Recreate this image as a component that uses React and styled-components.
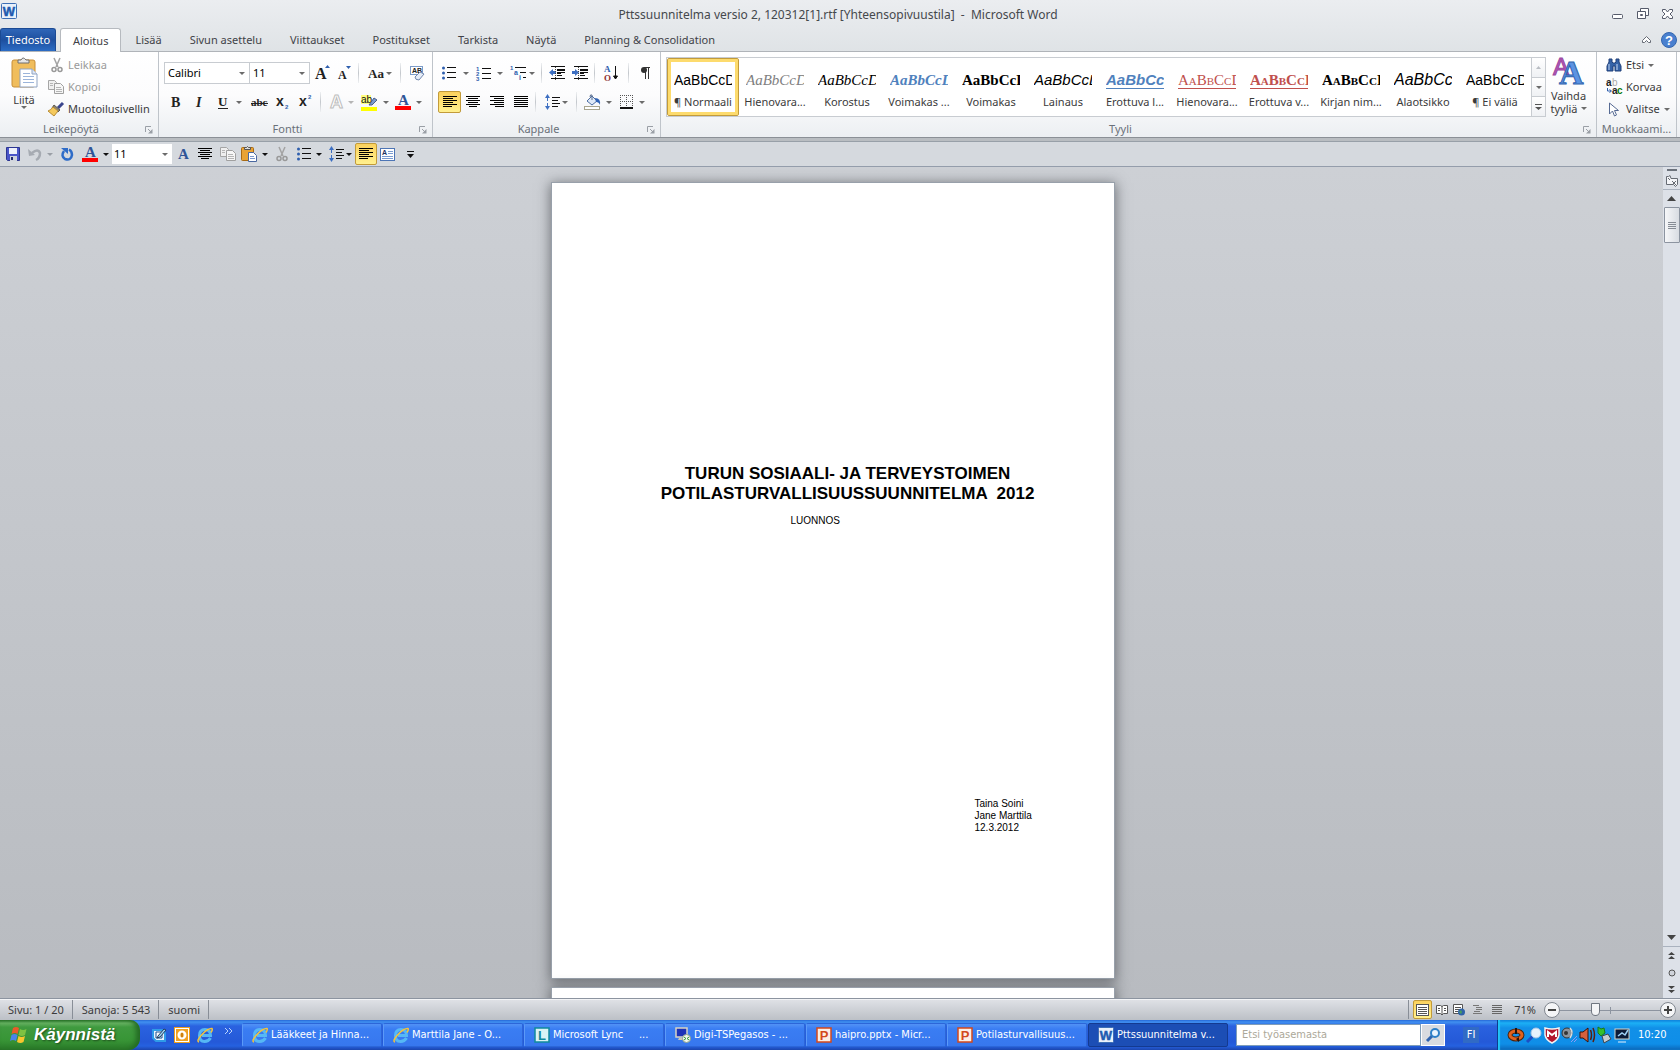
import { useState } from "react";
import styled, { createGlobalStyle, css } from "styled-components";

const GlobalStyle = createGlobalStyle`
  * {
    box-sizing: border-box;
  }

  body {
    margin: 0;
    font-family: "Noto Sans", "Open Sans", sans-serif;
    font-size: 11px;
    line-height: 14px;
    color: #3b3b3b;
  }

  button,
  input,
  select {
    font: inherit;
    color: inherit;
    margin: 0;
    padding: 0;
    border: 0;
    border-radius: 0;
    background: none;
  }

  svg {
    display: block;
    flex: none;
    overflow: visible;
  }
`;

const Screen = styled.div`
  display: flex;
  flex-direction: column;
  height: 100vh;
  overflow: hidden;
`;

/* ---------- title bar and tabs ---------- */

const Chrome = styled.header`
  background: linear-gradient(#ebedf0, #dfe3e6);
`;

const TitleBar = styled.div`
  display: grid;
  grid-template-columns: 120px 1fr 120px;
  align-items: center;
  height: 28px;
  padding: 0 5px 0 1px;
`;

const AppButton = styled.button`
  align-self: start;
  width: 16px;
  padding-top: 3px;
`;

const Title = styled.h1`
  margin: 0;
  padding-top: 2px;
  font-size: 12px;
  font-weight: 400;
  text-align: center;
  white-space: pre;
  color: #45484c;
`;

const WindowButtons = styled.div`
  display: flex;
  justify-content: flex-end;
  gap: 11px;
`;

const TabRow = styled.nav`
  display: flex;
  height: 24px;
  border-bottom: 1px solid #b0b4b9;
`;

const Tab = styled.button`
  height: 23px;
  padding: 0 14px;
  color: #3f4247;

  ${(p) =>
    p.$active &&
    css`
      height: 24px;
      padding: 0 12px;
      border: 1px solid #b6babf;
      border-bottom: 0;
      border-radius: 3px 3px 0 0;
      background: #fff;
    `}
`;

const FileTab = styled(Tab)`
  width: 56px;
  padding: 0;
  margin-right: 4px;
  border: 1px solid #1b4a94;
  border-bottom: 0;
  border-radius: 3px 3px 0 0;
  background: linear-gradient(#2f66b8, #1d4f9f 50%, #2b6cc4);
  color: #fff;
`;

const TabTools = styled.div`
  display: flex;
  align-items: center;
  gap: 10px;
  margin-left: auto;
  padding-right: 3px;
`;

/* ---------- ribbon ---------- */

const Ribbon = styled.div`
  display: flex;
  height: 86px;
  padding-right: 3px;
  border-bottom: 1px solid #8b9096;
  background: linear-gradient(#fff, #fcfcfd 50%, #eceff2);
`;

const Group = styled.section`
  display: flex;
  flex-direction: column;
  width: ${(p) => (p.$width ? `${p.$width}px` : "auto")};
  flex: ${(p) => (p.$width ? "none" : "1 1 0")};
  min-width: 0;
  border-right: 1px solid #bfc4ca;
`;

const GroupBody = styled.div`
  display: flex;
  flex: 1;
  min-height: 0;
  padding: 0 ${(p) => p.$pad || 0}px;
`;

const GroupFooter = styled.div`
  display: flex;
  align-items: center;
  height: 17px;
  color: #6a7079;
`;

const GroupName = styled.span`
  flex: 1;
  text-align: center;
  white-space: nowrap;
`;

const ToolRows = styled.div`
  display: flex;
  flex-direction: column;
  padding-top: 7px;
  gap: 1px;
`;

const ToolRow = styled.div`
  display: flex;
  align-items: center;
  height: 28px;
`;

const ToolButton = styled.button`
  display: flex;
  align-items: center;
  justify-content: center;
  gap: ${(p) => p.$gap || 0}px;
  flex: none;
  width: ${(p) => p.$width}px;
  height: 22px;

  ${(p) =>
    p.$active &&
    css`
      border: 1px solid #c29b3a;
      border-radius: 2px;
      background: linear-gradient(#fbd15d, #ffe57a 60%, #fff08f);
    `}
`;

const Divider = styled.i`
  flex: none;
  width: 1px;
  height: 20px;
  margin: 0 ${(p) => p.$space}px;
  background: linear-gradient(#eef0f2, #c3c7cc, #eef0f2);
`;

const Caret = styled.i`
  flex: none;
  width: 0;
  height: 0;
  border: 3px solid transparent;
  border-top-color: ${(p) => p.$color || "#6b6b6b"};
  border-bottom-width: 0;
`;

const ComboBox = styled.label`
  display: flex;
  align-items: center;
  flex: none;
  width: ${(p) => p.$width}px;
  height: ${(p) => p.$height}px;
  padding-right: 4px;
  border: ${(p) => (p.$plain ? "0" : "1px solid #c8ccd1")};
  background: #fff;
  color: #000;

  & + & {
    border-left: 0;
  }

  select {
    flex: 1;
    min-width: 0;
    padding-left: ${(p) => (p.$plain ? 2 : 3)}px;
    appearance: none;
    outline: 0;
  }
`;

const LargeButton = styled.button`
  display: flex;
  flex-direction: column;
  align-items: center;
  width: ${(p) => p.$width}px;
  padding-top: 5px;
  line-height: 13px;

  svg {
    margin-bottom: 4px;
  }
`;

const InlineLabel = styled.span`
  display: flex;
  align-items: center;
  gap: 3px;
`;

const SmallList = styled.div`
  display: flex;
  flex-direction: column;
  padding-top: 2px;
`;

const SmallButton = styled.button`
  display: flex;
  align-items: center;
  gap: 4px;
  height: 22px;
  color: ${(p) => (p.$muted ? "#9a9a9a" : "#3b3b3b")};
  white-space: nowrap;
`;

const Gallery = styled.div`
  display: flex;
  flex: 1;
  min-width: 0;
  height: 60px;
  margin-top: 5px;
  border: 1px solid #c8ccd1;
  background: #fff;
`;

const GalleryItems = styled.div`
  display: flex;
  flex: 1;
  min-width: 0;
  overflow: hidden;
`;

const StyleCard = styled.button`
  flex: none;
  width: 72px;
  height: 58px;
  padding: 4px 2px 0;
  text-align: center;
  white-space: nowrap;
  border-radius: 2px;

  ${(p) =>
    p.$active &&
    css`
      border: 1px solid #c29b3a;
      padding: 3px 1px 0;
      box-shadow: inset 0 0 0 3px #fddb6d;
    `}
`;

const Sample = styled.span`
  display: block;
  width: 58px;
  margin: 1px auto 5px;
  overflow: hidden;
  text-align: left;
  font-family: ${(p) =>
    p.$serif
      ? '"Liberation Serif", "Times New Roman", serif'
      : '"Liberation Sans", Arial, sans-serif'};
  font-size: ${(p) => p.$size || 15}px;
  line-height: 20px;
  font-weight: ${(p) => (p.$bold ? 700 : 400)};
  font-style: ${(p) => (p.$italic ? "italic" : "normal")};
  font-variant: ${(p) => (p.$caps ? "small-caps" : "normal")};
  text-decoration: ${(p) => (p.$underline ? "underline" : "none")};
  text-underline-offset: 3px;
  color: ${(p) => p.$color || "#000"};
`;

const GalleryScroll = styled.div`
  display: flex;
  flex-direction: column;
  width: 14px;
  border-left: 1px solid #c8ccd1;

  button {
    display: flex;
    flex: 1;
    flex-direction: column;
    align-items: center;
    justify-content: center;
    background: linear-gradient(#fff, #eff1f4);
  }

  button + button {
    border-top: 1px solid #c8ccd1;
  }
`;

/* ---------- quick access bar ---------- */

const QuickBar = styled.div`
  display: flex;
  align-items: center;
  height: 29px;
  padding: 1px 0 0 2px;
  border-top: 3px solid #b9bdc1;
  border-bottom: 1px solid #949dab;
  box-shadow: inset 0 1px 0 #98a0a8;
  background: #d5d9de;
`;

/* ---------- document ---------- */

const Workspace = styled.div`
  display: flex;
  flex: 1;
  min-height: 0;
`;

const Canvas = styled.main`
  display: flex;
  flex: 1;
  flex-direction: column;
  align-items: center;
  gap: 8px;
  padding: 15px 0 0 2px;
  overflow: hidden;
  background: linear-gradient(#cdd0d5, #b8bbc0);
`;

const Page = styled.article`
  flex: none;
  width: 564px;
  height: 797px;
  padding: 281px 48px 0 78px;
  border: 1px solid #98a0aa;
  background: #fff;
  box-shadow: 0 2px 12px 1px rgba(40, 44, 50, 0.55);
  color: #000;
  font-family: "Liberation Sans", Arial, sans-serif;
`;

const DocTitle = styled.h2`
  margin: 0;
  font-size: 17px;
  line-height: 20px;
  font-weight: 700;
  text-align: center;
  white-space: pre;
`;

const DocText = styled.p`
  margin: ${(p) => p.$top}px 0 0 ${(p) => p.$indent}px;
  font-size: 10px;
  line-height: 12px;
  white-space: pre-line;
`;

const ScrollBar = styled.div`
  display: flex;
  flex-direction: column;
  align-items: center;
  width: 17px;
  background: #dde1e8;

  button {
    display: flex;
    align-items: center;
    justify-content: center;
    width: 17px;
    height: 17px;
  }
`;

const SplitBox = styled.div`
  display: flex;
  flex-direction: column;
  align-items: center;
  gap: 4px;
  width: 17px;
  height: 23px;
  padding-top: 2px;
  border-bottom: 1px solid #aab2be;
`;

const ScrollTrack = styled.div`
  flex: 1;
  width: 17px;
`;

const ScrollThumb = styled.div`
  display: flex;
  flex-direction: column;
  align-items: center;
  justify-content: center;
  gap: 1px;
  width: 16px;
  height: 36px;
  border: 1px solid #8c94a0;
  border-radius: 1px;
  background: linear-gradient(90deg, #f6f7f9, #d8dce2);

  i {
    width: 8px;
    height: 1px;
    background: #868c95;
  }
`;

const BrowseButtons = styled.div`
  border-top: 1px solid #aab2be;
`;

/* ---------- status bar ---------- */

const StatusBar = styled.footer`
  display: flex;
  align-items: center;
  height: 22px;
  border-top: 1px solid #8c94a0;
  box-shadow: inset 0 1px 0 #f3f4f6;
  background: linear-gradient(#e0e2e7, #bcc0c6);
`;

const StatusCell = styled.span`
  padding: 0 8px 0 ${(p) => (p.$first ? 8 : 9)}px;
  line-height: 19px;
  border-right: 1px solid #888e97;
`;

const ViewTools = styled.div`
  display: flex;
  align-items: center;
  margin-left: auto;
  padding-left: 4px;
  border-left: 1px solid #888e97;
`;

const ViewButton = styled(ToolButton)`
  height: 19px;
`;

const Zoom = styled.div`
  display: flex;
  align-items: center;
  padding-right: 4px;

  span {
    width: 38px;
    text-align: center;
  }
`;

const RoundButton = styled.button`
  display: flex;
  align-items: center;
  justify-content: center;
  width: 16px;
  height: 16px;
  border: 1px solid #80868f;
  border-radius: 50%;
  background: #f4f5f7;
`;

const ZoomSlider = styled.input`
  width: 100px;
  height: 16px;
  appearance: none;
  background:
    linear-gradient(#8d94a0, #8d94a0) 50px 5px / 1px 7px no-repeat,
    linear-gradient(#8d94a0, #8d94a0) 0 8px / 100% 1px no-repeat;

  &::-webkit-slider-thumb {
    appearance: none;
    width: 9px;
    height: 13px;
    background: #f4f5f7;
    border: 1px solid #6f7680;
    border-radius: 1px 1px 5px 5px;
  }
`;

/* ---------- taskbar ---------- */

const TaskBar = styled.div`
  display: flex;
  align-items: center;
  height: 30px;
  font-size: 11px;
  color: #fff;
  background: linear-gradient(
    #2668d8,
    #4090f0 2px,
    #2a62e0 6px,
    #2459d8 22px,
    #2561e0 26px,
    #1c45ad
  );
  font-family: "DejaVu Sans Condensed", "Noto Sans", Tahoma, sans-serif;
`;

const StartButton = styled.button`
  display: flex;
  align-items: center;
  gap: 6px;
  width: 140px;
  height: 30px;
  padding-left: 10px;
  border-radius: 0 10px 12px 0;
  background: linear-gradient(
    #2c7a2b,
    #6ab565 3px,
    #3f9a3f 7px,
    #389536 20px,
    #2a7a29
  );
  box-shadow: inset -4px 0 5px #246b24;
  font-family: "Liberation Sans", Arial, sans-serif;
  font-size: 17px;
  font-weight: 700;
  font-style: italic;
  text-shadow: 1px 1px 2px #1c4a1b;
`;

const QuickLaunch = styled.div`
  display: flex;
  align-items: center;
  gap: 7px;
  width: 102px;
  padding-left: 11px;
`;

const TaskList = styled.div`
  display: flex;
  flex: 1 1 0;
  gap: 1px;
  min-width: 0;
`;

const TaskButton = styled.button`
  display: flex;
  align-items: center;
  gap: 3px;
  flex: 0 1 140px;
  min-width: 0;
  height: 24px;
  padding: 0 4px 0 9px;
  border-radius: 2px;
  border: 1px solid ${(p) => (p.$active ? "#143a90" : "#2c66d8")};
  border-left-color: ${(p) => (p.$active ? "#143a90" : "#5b9af8")};
  background: ${(p) =>
    p.$active ? "#1c4eb5" : "linear-gradient(#5292f6, #3a7df3 5px, #3777ee)"};
  white-space: pre;

  span {
    overflow: hidden;
  }
`;

const SearchForm = styled.form`
  display: flex;
  width: 209px;
  height: 22px;

  input {
    flex: 1;
    min-width: 0;
    padding-left: 5px;
    background: #fff;
    border: 1px solid #7f9db9;
    color: #000;
  }

  input::placeholder {
    color: #aca899;
    opacity: 1;
  }

  button {
    display: flex;
    align-items: center;
    justify-content: center;
    width: 24px;
    border: 1px solid #fff;
    background: #d8dbe0;
  }
`;

const Language = styled.span`
  width: 16px;
  margin: 0 18px;
  line-height: 16px;
  text-align: center;
  background: #316ac5;
`;

const Tray = styled.div`
  display: flex;
  align-items: center;
  gap: 1px;
  width: 183px;
  height: 30px;
  padding-left: 10px;
  border-left: 1px solid #0d3d8f;
  box-shadow: inset 2px 0 1px #22c3f7;
  background: linear-gradient(#0d7ad9, #1cb0f5 3px, #1190e8 8px, #0f8ee8 24px, #0c66b8);

  time {
    margin-left: 6px;
  }
`;

/* ---------- drawings ---------- */

const Svg = ({ w = 16, h = 16, children }) => (
  <svg width={w} height={h} viewBox={`0 0 ${w} ${h}`} aria-hidden="true">
    {children}
  </svg>
);

const SANS = "Liberation Sans, Arial, sans-serif";
const SERIF = "Liberation Serif, Times New Roman, serif";

const Glyph = ({ x, y, size, children, fill = "#222", serif, ...rest }) => (
  <text x={x} y={y} fontSize={size} fill={fill} fontFamily={serif ? SERIF : SANS} {...rest}>
    {children}
  </text>
);

const ALIGN = {
  left: [[0, 14], [0, 10], [0, 14], [0, 10], [0, 14], [0, 9]],
  center: [[0, 14], [2, 10], [0, 14], [2, 10], [0, 14], [3, 8]],
  right: [[0, 14], [4, 10], [0, 14], [4, 10], [0, 14], [5, 9]],
  justify: [[0, 14], [0, 14], [0, 14], [0, 14], [0, 14], [0, 14]],
};

const AlignIcon = ({ kind }) => (
  <Svg w={14} h={12}>
    {ALIGN[kind].map(([x, w], i) => (
      <rect key={i} x={x} y={i * 2} width={w} height="1" fill="#000" />
    ))}
  </Svg>
);

const BulletsIcon = () => (
  <Svg w={14} h={14}>
    {[2, 7, 12].map((y) => (
      <g key={y}>
        <circle cx="1.5" cy={y} r="1.5" fill="#2f5fae" />
        <rect x="5" y={y - 1} width="9" height="1" fill="#111" />
      </g>
    ))}
  </Svg>
);

const NumbersIcon = () => (
  <Svg w={15} h={15}>
    {[1, 2, 3].map((n) => (
      <g key={n}>
        <Glyph x="0" y={n * 5} size="6" fill="#2f5fae" fontWeight="700">{n}</Glyph>
        <rect x="6" y={n * 5 - 3} width="9" height="1" fill="#111" />
      </g>
    ))}
  </Svg>
);

const MultiIcon = () => (
  <Svg w={17} h={16}>
    <Glyph x="0" y="5" size="6" fill="#2f5fae" fontWeight="700">1</Glyph>
    <Glyph x="4" y="10" size="7" fill="#2f5fae" fontWeight="700">a</Glyph>
    <Glyph x="9" y="15" size="7" fill="#2f5fae" fontWeight="700">i</Glyph>
    <path d="M5 2.500h11M10 7.500h6M13 12.500h3" stroke="#111" />
  </Svg>
);

const IndentIcon = ({ out }) => (
  <Svg w={17} h={14}>
    <path d="M2 .5h14M8 3.500h8M8 6.500h8M8 9.500h5M2 12.500h14" stroke="#111" />
    <path d="M8 4.500h8M8 7.500h4" stroke="#111" />
    {out ? (
      <path d="M0 6.500L4 3v2h3v3H4v2z" fill="#3d6fc2" />
    ) : (
      <path d="M7 6.500L3 3v2H0v3h3v2z" fill="#3d6fc2" />
    )}
    <path d="M6.500 1v13" stroke="#444" strokeDasharray="1 1" />
  </Svg>
);

const SortIcon = () => (
  <Svg w={15} h={16}>
    <Glyph x="0" y="7" size="9" serif fill="#2f5fae" fontWeight="700">A</Glyph>
    <Glyph x="0" y="16" size="9" serif fill="#8c3030" fontWeight="700">O</Glyph>
    <path d="M11.500 1v12M9.500 11l2 3 2-3z" stroke="#111" fill="#111" />
  </Svg>
);

const SpacingIcon = () => (
  <Svg w={16} h={16}>
    <path d="M2.500 3v4M2.500 9v4" stroke="#3d6fc2" />
    <path d="M0 4l2.500-4L5 4zM0 12l2.500 4L5 12z" fill="#3d6fc2" />
    <path d="M7 3.500h8M7 6.500h6M7 9.500h8M7 12.500h6" stroke="#111" />
  </Svg>
);

const BucketIcon = () => (
  <Svg w={17} h={16}>
    <path d="M3 7l5-5 5 5-5 4z" fill="#dfe9f7" stroke="#4d6ea3" />
    <path d="M8 6V1q-2-1-2 2" fill="none" stroke="#5b6f8e" />
    <path d="M11 4q6 0 5 7-1-3-4-3z" fill="#2f62b5" />
    <rect x=".5" y="12.500" width="15" height="3" fill="#fff" stroke="#a8a58f" />
  </Svg>
);

const BordersIcon = () => (
  <Svg w={14} h={14}>
    <path
      d="M.5 0v13M6.500 0v13M12.500 0v13M0 .5h13M0 6.500h13"
      stroke="#555"
      strokeDasharray="1 1"
    />
    <path d="M0 13h13" stroke="#111" strokeWidth="2" />
  </Svg>
);

const ScissorsIcon = () => (
  <Svg w={12} h={15}>
    <path d="M3 0l4 9M9 0L5 9" stroke="#a3a3a3" strokeWidth="1.500" />
    <circle cx="3" cy="11.500" r="2" fill="none" stroke="#999" strokeWidth="1.500" />
    <circle cx="9" cy="11.500" r="2" fill="none" stroke="#999" strokeWidth="1.500" />
  </Svg>
);

const CopyIcon = () => (
  <Svg w={16} h={14}>
    <path d="M.5.5h6l2 2v7h-8z" fill="#efefef" stroke="#a5a5a5" />
    <path d="M6.500 3.500h6l3 3v7h-9z" fill="#f6f6f6" stroke="#a0a0a0" />
    <path d="M2 3.500h3M2 5.500h3M8 7.500h5M8 9.500h6M8 11.500h6" stroke="#b5b5b5" />
  </Svg>
);

const BrushIcon = () => (
  <Svg w={16} h={14}>
    <path d="M15 1l-5 5" stroke="#39458d" strokeWidth="3" />
    <path d="M6 3l6 5-2 2-6-4z" fill="#8b8577" stroke="#5d594f" />
    <path d="M5 5l5 4-4 5-6-5q3-1 5-4z" fill="#f4c95d" stroke="#b88c33" />
  </Svg>
);

const PasteIcon = () => (
  <Svg w={27} h={32}>
    <rect x="1" y="3" width="23" height="27" rx="2" fill="#f0bd5c" stroke="#c88e36" />
    <path d="M7 6V3h3q2-4 5 0h3v3z" fill="#e6e6e6" stroke="#6f6f6f" />
    <path d="M9 12h12l5 5v13H9z" fill="#fff" stroke="#8fa3c2" />
    <path d="M21 12v5h5" fill="#dfe8f5" stroke="#8fa3c2" />
    <path d="M12 16.500h7M12 19.500h11M12 22.500h11M12 25.500h11" stroke="#9bb4da" />
  </Svg>
);

const SmallPasteIcon = () => (
  <Svg>
    <rect x=".5" y="1.500" width="12" height="13" rx="1" fill="#e9a335" stroke="#a86a14" />
    <path d="M3.500 3.500v-2h2q1-2 2 0h2v2z" fill="#ddd" stroke="#555" />
    <path d="M7.500 6.500h5l3 3v6h-8z" fill="#fff" stroke="#4a68a0" />
    <path d="M9 10.500h4M9 12.500h5" stroke="#7a97cc" />
  </Svg>
);

const FontColorIcon = () => (
  <Svg w={16} h={16}>
    <Glyph x="3" y="11" size="15" serif fill="#2f5597" fontWeight="700">A</Glyph>
    <rect y="12" width="16" height="4" fill="#f00" />
  </Svg>
);

const HighlightIcon = () => (
  <Svg w={17} h={17}>
    <rect y="1" width="10" height="9" fill="#ffff80" />
    <Glyph x="0" y="9" size="10" fill="#111">ab</Glyph>
    <path d="M8 11l5-7 3 2-5 5z" fill="#7a9bd0" stroke="#4d5f86" />
    <rect y="13" width="16" height="4" fill="#ff0" />
  </Svg>
);

const EraserIcon = () => (
  <Svg w={17} h={16}>
    <rect x="1.500" y="1.500" width="12" height="8" fill="#fff" stroke="#7d9cc8" />
    <Glyph x="3" y="8" size="7" fill="#222" fontWeight="700">AB</Glyph>
    <path d="M6 12l5-5 4 2-5 6q-4 0-4-3z" fill="#e6edf8" stroke="#7186ad" />
  </Svg>
);

const ChangeStylesIcon = () => (
  <Svg w={30} h={28}>
    <Glyph x="-1" y="18" size="24" fill="#b557b8" stroke="#9a48a0">A</Glyph>
    <Glyph x="5" y="27" size="34" serif fill="#5b93e2" stroke="#2f62ae" fontWeight="700">A</Glyph>
  </Svg>
);

const BinocularsIcon = () => (
  <Svg w={16} h={14}>
    <path
      d="M3 1h3v3l1 1h2l1-1V1h3v3l2 4v5H9V8H7v5H1V8l2-4z"
      fill="#3563a8"
      stroke="#1f3f78"
    />
    <path d="M3 6v6M11 6v6" stroke="#c8daf3" />
  </Svg>
);

const ReplaceIcon = () => (
  <Svg w={16} h={15}>
    <Glyph x="0" y="6" size="10" fontWeight="700">a</Glyph>
    <Glyph x="6" y="6" size="10" fill="#aaa">b</Glyph>
    <path d="M1.500 8v3H5M3.500 9.500l2 1.500-2 1.500" fill="none" stroke="#2f5fae" />
    <Glyph x="6" y="14" size="10" fontWeight="700">a</Glyph>
    <Glyph x="11" y="14" size="10" fill="#0f7a0f" fontWeight="700">c</Glyph>
  </Svg>
);

const CursorIcon = () => (
  <Svg w={16} h={15}>
    <path d="M3.500 1v11l3-3 2 5 2-1-2-4.500h4z" fill="#fff" stroke="#566a93" />
  </Svg>
);

const WordIcon = () => (
  <Svg>
    <rect x=".5" y=".5" width="15" height="15" rx="1" fill="#e9f1fb" stroke="#3c6eb5" />
    <Glyph
      x="8"
      y="12.500"
      size="13"
      fill="#1f5bb0"
      fontWeight="700"
      stroke="#1f5bb0"
      strokeWidth=".5"
      textAnchor="middle"
    >
      W
    </Glyph>
  </Svg>
);

const LetterIcon = ({ letter, color, back }) => (
  <Svg>
    <rect x="1" y="1" width="14" height="14" fill={back} stroke={color} strokeWidth="1.500" />
    <Glyph x="8" y="13" size="13" fill={color} fontWeight="700" textAnchor="middle">
      {letter}
    </Glyph>
  </Svg>
);

const OutlookIcon = () => (
  <Svg>
    <rect width="16" height="16" fill="#f0a01e" />
    <rect x="1.500" y="1.500" width="13" height="13" fill="none" stroke="#fff" />
    <circle cx="8" cy="8" r="3.500" fill="#fff3c8" stroke="#fff" strokeWidth="2" />
    <ellipse cx="8" cy="8" rx="1.500" ry="2.500" fill="#d07f0c" />
  </Svg>
);

const ExplorerIcon = () => (
  <Svg>
    <path
      d="M13.500 11q-2 3.500-6 3.500-5 0-5-6t5.500-6 5.500 6H5"
      fill="none"
      stroke="#56b8f5"
      strokeWidth="3"
    />
    <path
      d="M2 15Q-1 14 5 7.500T15 1.500q1 1-1 4"
      fill="none"
      stroke="#f3c33c"
      strokeWidth="1.500"
    />
  </Svg>
);

const DesktopIcon = () => (
  <Svg>
    <path d="M2 3h9l3 3v8H5L2 11z" fill="#e9f3fc" stroke="#2f9be8" strokeWidth="2" />
    <path d="M5 5h6v6H5z" fill="#fff" stroke="#1d4f8e" />
    <path d="M7 9l6-7 2 1-6 7-3 1z" fill="#9cd3f5" stroke="#253c5c" />
  </Svg>
);

const ComputerIcon = () => (
  <Svg>
    <rect x="1" y="1" width="11" height="9" fill="#1d32b8" stroke="#d7d3c4" strokeWidth="1.500" />
    <path d="M3 13h6l1-2H4z" fill="#c9c6b8" />
    <circle cx="11.500" cy="11.500" r="4" fill="#f1f6ee" stroke="#8aa08a" />
    <path d="M9 10l2 1.500L9 13M14 10l-2 1.500 2 1.500" fill="none" stroke="#2e9a35" />
  </Svg>
);

const MagnifierIcon = () => (
  <Svg w={14} h={14}>
    <path d="M6 8l-5 5" stroke="#2e63b0" strokeWidth="3" />
    <circle cx="9" cy="5" r="4" fill="#e9f4ff" stroke="#2e80c8" strokeWidth="2" />
  </Svg>
);

const FlagIcon = () => (
  <Svg w={18} h={18}>
    <path d="M3 2q3-2 6 0L7.500 8Q5 6 1.500 8z" fill="#ea5a2a" />
    <path d="M10 3q3 2 6.500 0L15 9q-3 2-6.500 0z" fill="#7ec242" />
    <path d="M1.500 9q3-2 6 0L6 15q-3-2-6 0z" fill="#4a83ea" />
    <path d="M8.500 10q3 2 6.500 0L13.500 16q-3 2-6.500 0z" fill="#f8c62e" />
  </Svg>
);

const SaveIcon = () => (
  <Svg w={14} h={14}>
    <path d="M.5.5h13v13h-12l-1-1z" fill="#4a55c8" stroke="#2c3692" />
    <rect x="3" y="1" width="8" height="6" fill="#eef1fb" />
    <rect x="4" y="9" width="7" height="5" fill="#cfd3dc" />
    <rect x="5" y="10" width="2" height="3" fill="#20286e" />
  </Svg>
);

const UndoIcon = () => (
  <Svg w={14} h={14}>
    <path d="M4 6q6-5 8 0 0 5-4 7" fill="none" stroke="#a6abb2" strokeWidth="2.500" />
    <path d="M0 2l1 7 6-1z" fill="#a6abb2" />
  </Svg>
);

const RedoIcon = () => (
  <Svg w={13} h={14}>
    <path
      d="M3 4q-3.500 5 1 8 6 2 7-4 0-4-3-5.500"
      fill="none"
      stroke="#2e6cc8"
      strokeWidth="2.500"
    />
    <path d="M0 1h7v6z" fill="#2e6cc8" />
  </Svg>
);

const TextBoxIcon = () => (
  <Svg w={15} h={13}>
    <rect x=".5" y=".5" width="14" height="12" fill="#fff" stroke="#4d75b5" />
    <Glyph x="2" y="7" size="7" fill="#1d2f5e" fontWeight="700">A</Glyph>
    <path d="M8 3.500h5M8 5.500h5M2 8.500h11M2 10.500h11" stroke="#7a9bd0" />
  </Svg>
);

const LauncherIcon = () => (
  <Svg w={8} h={8}>
    <path d="M.5 6V.5H6M3 3l3 3" fill="none" stroke="#9a9fa6" />
    <path d="M7.500 3v4.500H3z" fill="#9a9fa6" />
  </Svg>
);

const DoubleArrow = ({ down }) => (
  <Svg w={7} h={7}>
    {down ? (
      <path d="M0 0h7L3.500 3zM0 4h7L3.500 7z" fill="#444" />
    ) : (
      <path d="M0 3h7L3.500 0zM0 7h7L3.500 4z" fill="#444" />
    )}
  </Svg>
);

const PageIcon = () => (
  <Svg w={13} h={12}>
    <rect x=".5" y=".5" width="12" height="11" fill="#fff" stroke="#555" />
    <path d="M2 3.500h9M2 5.500h9M2 7.500h9M2 9.500h9" stroke="#555" />
  </Svg>
);

/* ---------- parts ---------- */

const Tool = ({ label, width, arrow, gap = 5, active, caretColor, children }) => (
  <ToolButton type="button" aria-label={label} $width={width} $gap={gap} $active={active}>
    {children}
    {arrow && <Caret $color={caretColor} />}
  </ToolButton>
);

const Combo = ({ label, value, ...rest }) => (
  <ComboBox {...rest}>
    <select aria-label={label} defaultValue={value}>
      <option>{value}</option>
    </select>
    <Caret />
  </ComboBox>
);

const Launcher = styled.button`
  width: 16px;
  height: 16px;
  padding-left: 3px;
  padding-top: 3px;
`;

const RibbonGroup = ({ name, width, pad, launcher = true, children }) => (
  <Group $width={width} aria-label={name}>
    <GroupBody $pad={pad}>{children}</GroupBody>
    <GroupFooter>
      <GroupName>{name}</GroupName>
      {launcher && (
        <Launcher type="button" aria-label={`${name}: asetukset`}>
          <LauncherIcon />
        </Launcher>
      )}
    </GroupFooter>
  </Group>
);

const TABS = [
  "Aloitus",
  "Lisää",
  "Sivun asettelu",
  "Viittaukset",
  "Postitukset",
  "Tarkista",
  "Näytä",
  "Planning & Consolidation",
];

const BLUE = "#4f81bd";
const RED = "#c0504d";

const STYLES = [
  { name: "¶ Normaali", look: { $size: 14 } },
  { name: "Hienovara...", look: { $serif: true, $italic: true, $color: "#808080" } },
  { name: "Korostus", look: { $serif: true, $italic: true } },
  { name: "Voimakas ...", look: { $serif: true, $italic: true, $bold: true, $color: BLUE } },
  { name: "Voimakas", look: { $serif: true, $bold: true } },
  { name: "Lainaus", look: { $italic: true } },
  { name: "Erottuva l...", look: { $italic: true, $bold: true, $underline: true, $color: BLUE } },
  { name: "Hienovara...", look: { $serif: true, $caps: true, $underline: true, $color: RED } },
  {
    name: "Erottuva v...",
    look: { $serif: true, $caps: true, $bold: true, $underline: true, $color: RED },
  },
  { name: "Kirjan nim...", look: { $serif: true, $caps: true, $bold: true } },
  { name: "Alaotsikko", look: { $italic: true, $size: 16 } },
  { name: "¶ Ei väliä", look: { $size: 14 } },
];

const TASKS = [
  { text: "Lääkkeet ja Hinna...", icon: <ExplorerIcon /> },
  { text: "Marttila Jane - O...", icon: <ExplorerIcon /> },
  { text: "Microsoft Lync     ...", icon: <LetterIcon letter="L" color="#118a9c" back="#d8f3f5" /> },
  { text: "Digi-TSPegasos - ...", icon: <ComputerIcon /> },
  { text: "haipro.pptx - Micr...", icon: <LetterIcon letter="P" color="#d2481c" back="#fdeee5" /> },
  { text: "Potilasturvallisuus...", icon: <LetterIcon letter="P" color="#d2481c" back="#fdeee5" /> },
  { text: "Pttssuunnitelma v...", icon: <WordIcon />, active: true },
];

const ClipboardGroup = () => (
  <RibbonGroup name="Leikepöytä" width={159}>
    <LargeButton type="button" $width={48}>
      <PasteIcon />
      Liitä
      <Caret />
    </LargeButton>
    <SmallList>
      <SmallButton type="button" $muted>
        <Svg w={16} h={15}>
          <g transform="translate(3 0)">
            <ScissorsIcon />
          </g>
        </Svg>
        Leikkaa
      </SmallButton>
      <SmallButton type="button" $muted>
        <CopyIcon />
        Kopioi
      </SmallButton>
      <SmallButton type="button">
        <BrushIcon />
        Muotoilusivellin
      </SmallButton>
    </SmallList>
  </RibbonGroup>
);

const FontGroup = () => (
  <RibbonGroup name="Fontti" width={274} pad={5}>
    <ToolRows>
      <ToolRow>
        <Combo label="Fontti" value="Calibri" $width={86} $height={22} />
        <Combo label="Fonttikoko" value="11" $width={60} $height={22} />
        <Tool label="Suurenna fonttia" width={25}>
          <Svg w={15}>
            <Glyph x="0" y="14" size="16" serif fontWeight="700">A</Glyph>
            <path d="M10 3h5l-2.500-3z" fill="#2f5fae" />
          </Svg>
        </Tool>
        <Tool label="Pienennä fonttia" width={19}>
          <Svg w={13}>
            <Glyph x="0" y="14" size="12" serif fontWeight="700">A</Glyph>
            <path d="M8 1h5l-2.500 3z" fill="#2f5fae" />
          </Svg>
        </Tool>
        <Divider $space={4} />
        <Tool label="Vaihda kirjainkoko" width={33} arrow gap={2}>
          <Svg w={16}>
            <Glyph x="0" y="13" size="13" serif fontWeight="700">Aa</Glyph>
          </Svg>
        </Tool>
        <Divider $space={4} />
        <Tool label="Poista muotoilut" width={24}>
          <EraserIcon />
        </Tool>
      </ToolRow>
      <ToolRow>
        <Tool label="Lihavointi" width={24}>
          <Svg w={10}>
            <Glyph x="0" y="13" size="14" serif fontWeight="700">B</Glyph>
          </Svg>
        </Tool>
        <Tool label="Kursivointi" width={22}>
          <Svg w={8}>
            <Glyph x="1" y="13" size="14" serif fontStyle="italic" fontWeight="700">I</Glyph>
          </Svg>
        </Tool>
        <Tool label="Alleviivaus" width={39} arrow gap={8}>
          <Svg w={10}>
            <Glyph x="0" y="12" size="13" serif fontWeight="700">U</Glyph>
            <path d="M0 14.500h10" stroke="#222" />
          </Svg>
        </Tool>
        <Tool label="Yliviivaus" width={20}>
          <Svg w={17}>
            <Glyph x="0" y="12" size="11" serif fontWeight="700">abc</Glyph>
            <path d="M0 9.500h17" stroke="#222" />
          </Svg>
        </Tool>
        <Tool label="Alaindeksi" width={26}>
          <Svg w={13}>
            <Glyph x="0" y="12" size="14" fontWeight="700">x</Glyph>
            <Glyph x="9" y="15" size="6" fill="#2f5fae" fontWeight="700">2</Glyph>
          </Svg>
        </Tool>
        <Tool label="Yläindeksi" width={21}>
          <Svg w={13}>
            <Glyph x="0" y="12" size="14" fontWeight="700">x</Glyph>
            <Glyph x="9" y="5" size="6" fill="#2f5fae" fontWeight="700">2</Glyph>
          </Svg>
        </Tool>
        <Divider $space={4} />
        <Tool label="Tekstitehosteet" width={32} arrow gap={4} caretColor="#b5b5b5">
          <Svg w={15}>
            <Glyph x="1" y="14" size="18" fill="#fff" stroke="#bdbdbd" fontWeight="700">A</Glyph>
          </Svg>
        </Tool>
        <Tool label="Korostusväri" width={35} arrow>
          <HighlightIcon />
        </Tool>
        <Tool label="Fontin väri" width={32} arrow>
          <FontColorIcon />
        </Tool>
      </ToolRow>
    </ToolRows>
  </RibbonGroup>
);

const ParagraphGroup = () => (
  <RibbonGroup name="Kappale" width={228} pad={5}>
    <ToolRows>
      <ToolRow>
        <Tool label="Luettelomerkit" width={34} arrow gap={7}>
          <BulletsIcon />
        </Tool>
        <Tool label="Numerointi" width={34} arrow gap={6}>
          <NumbersIcon />
        </Tool>
        <Tool label="Monitasoinen luettelo" width={32} arrow gap={2}>
          <MultiIcon />
        </Tool>
        <Divider $space={3} />
        <Tool label="Pienennä sisennystä" width={24}>
          <IndentIcon out />
        </Tool>
        <Tool label="Suurenna sisennystä" width={22}>
          <IndentIcon />
        </Tool>
        <Divider $space={3} />
        <Tool label="Lajittele" width={27}>
          <SortIcon />
        </Tool>
        <Divider $space={3} />
        <Tool label="Näytä kaikki" width={26}>
          <Svg w={10}>
            <path d="M10 2.500H4M5.500 3v11M8.500 3v11" stroke="#333" fill="none" />
            <circle cx="4" cy="5" r="3" fill="#333" />
          </Svg>
        </Tool>
      </ToolRow>
      <ToolRow>
        <Tool label="Tasaa vasemmalle" width={23} active>
          <AlignIcon kind="left" />
        </Tool>
        <Tool label="Keskitä" width={24}>
          <AlignIcon kind="center" />
        </Tool>
        <Tool label="Tasaa oikealle" width={24}>
          <AlignIcon kind="right" />
        </Tool>
        <Tool label="Tasaa molemmat reunat" width={23}>
          <AlignIcon kind="justify" />
        </Tool>
        <Divider $space={3} />
        <Tool label="Riviväli" width={34} arrow gap={1}>
          <SpacingIcon />
        </Tool>
        <Divider $space={3} />
        <Tool label="Varjostus" width={36} arrow>
          <BucketIcon />
        </Tool>
        <Tool label="Reunat" width={32} arrow>
          <BordersIcon />
        </Tool>
      </ToolRow>
    </ToolRows>
  </RibbonGroup>
);

const StylesGroup = () => {
  const [active, setActive] = useState(0);

  return (
    <RibbonGroup name="Tyyli" pad={5}>
      <Gallery>
        <GalleryItems>
          {STYLES.map((item, index) => (
            <StyleCard
              key={index}
              type="button"
              $active={index === active}
              onClick={() => setActive(index)}
            >
              <Sample {...item.look}>AaBbCcDd</Sample>
              {item.name}
            </StyleCard>
          ))}
        </GalleryItems>
        <GalleryScroll>
          <button type="button" aria-label="Edellinen rivi">
            <Svg w={5} h={3}>
              <path d="M0 3h5L2.500 0z" fill="#b9bdc3" />
            </Svg>
          </button>
          <button type="button" aria-label="Seuraava rivi">
            <Caret />
          </button>
          <button type="button" aria-label="Lisää tyylejä">
            <Svg w={7} h={6}>
              <path d="M0 0h7v1H0zM0 3h7L3.500 6z" fill="#555" />
            </Svg>
          </button>
        </GalleryScroll>
      </Gallery>
      <LargeButton type="button" $width={45}>
        <ChangeStylesIcon />
        Vaihda
        <InlineLabel>
          tyyliä <Caret />
        </InlineLabel>
      </LargeButton>
    </RibbonGroup>
  );
};

const EditingGroup = () => (
  <RibbonGroup name="Muokkaami..." width={80} pad={9} launcher={false}>
    <SmallList>
      <SmallButton type="button">
        <BinocularsIcon />
        Etsi <Caret />
      </SmallButton>
      <SmallButton type="button">
        <ReplaceIcon />
        Korvaa
      </SmallButton>
      <SmallButton type="button">
        <CursorIcon />
        Valitse <Caret />
      </SmallButton>
    </SmallList>
  </RibbonGroup>
);

const QuickAccess = () => (
  <QuickBar>
    <Tool label="Tallenna" width={22}>
      <SaveIcon />
    </Tool>
    <Tool label="Kumoa" width={32} arrow caretColor="#9a9fa6">
      <UndoIcon />
    </Tool>
    <Tool label="Toista" width={22}>
      <RedoIcon />
    </Tool>
    <Tool label="Fontin väri" width={34} arrow caretColor="#111">
      <FontColorIcon />
    </Tool>
    <Combo label="Koko" value="11" $width={60} $height={20} $plain />
    <Tool label="Tyylit" width={22}>
      <Svg w={11}>
        <Glyph x="0" y="13" size="15" serif fill="#2f5597" fontWeight="700">A</Glyph>
      </Svg>
    </Tool>
    <Tool label="Keskitä" width={22}>
      <AlignIcon kind="center" />
    </Tool>
    <Tool label="Kopioi" width={23}>
      <CopyIcon />
    </Tool>
    <Tool label="Liitä" width={31} arrow caretColor="#111">
      <SmallPasteIcon />
    </Tool>
    <Tool label="Leikkaa" width={23}>
      <ScissorsIcon />
    </Tool>
    <Tool label="Luettelomerkit" width={32} arrow caretColor="#111">
      <BulletsIcon />
    </Tool>
    <Tool label="Riviväli" width={30} arrow gap={1} caretColor="#111">
      <SpacingIcon />
    </Tool>
    <Tool label="Tasaa vasemmalle" width={22} active>
      <AlignIcon kind="left" />
    </Tool>
    <Tool label="Tekstiruutu" width={21}>
      <TextBoxIcon />
    </Tool>
    <Tool label="Mukauta" width={24}>
      <Svg w={7} h={7}>
        <path d="M0 0h7v1H0zM0 3h7L3.500 7z" fill="#111" />
      </Svg>
    </Tool>
  </QuickBar>
);

const Scroll = () => (
  <ScrollBar>
    <SplitBox>
      <Svg w={10} h={2}>
        <rect width="10" height="2" fill="#6c727b" />
      </Svg>
      <Svg w={12} h={12}>
        <path d="M.5 1.500h2l1.500-1 1 3h6.500v6l-2 2-2-2h-7z" fill="#f4f5f8" stroke="#666b73" />
        <path d="M2 3l2 2M6 6l4 4M6 10l4-4" stroke="#666b73" />
      </Svg>
    </SplitBox>
    <button type="button" aria-label="Ylös">
      <Svg w={9} h={5}>
        <path d="M0 5h9L4.500 0z" fill="#444" />
      </Svg>
    </button>
    <ScrollThumb>
      {[0, 1, 2, 3].map((n) => (
        <i key={n} />
      ))}
    </ScrollThumb>
    <ScrollTrack />
    <button type="button" aria-label="Alas">
      <Svg w={9} h={5}>
        <path d="M0 0h9L4.500 5z" fill="#444" />
      </Svg>
    </button>
    <BrowseButtons>
      <button type="button" aria-label="Edellinen sivu">
        <DoubleArrow />
      </button>
      <button type="button" aria-label="Valitse selauskohde">
        <Svg w={8} h={8}>
          <circle cx="4" cy="4" r="3" fill="#cfd3da" stroke="#555" />
        </Svg>
      </button>
      <button type="button" aria-label="Seuraava sivu">
        <DoubleArrow down />
      </button>
    </BrowseButtons>
  </ScrollBar>
);

const Status = () => {
  const [zoom, setZoom] = useState(34);

  return (
    <StatusBar>
      <StatusCell $first>Sivu: 1 / 20</StatusCell>
      <StatusCell>Sanoja: 5 543</StatusCell>
      <StatusCell>suomi</StatusCell>
      <ViewTools>
        <ViewButton type="button" aria-label="Tulostusasettelu" $width={19} $active>
          <PageIcon />
        </ViewButton>
        <ViewButton type="button" aria-label="Koko näytön luku" $width={19}>
          <Svg w={12} h={12}>
            <path
              d="M.5 1.500h4l1.500 1 1.500-1h4v8h-4L6 11 4.500 9.500h-4zM6 2v9"
              fill="#fff"
              stroke="#555"
            />
            <path d="M2 4.500h2M2 6.500h2M8 4.500h2M8 6.500h2" stroke="#555" />
          </Svg>
        </ViewButton>
        <ViewButton type="button" aria-label="Verkkoasettelu" $width={17}>
          <Svg w={13} h={12}>
            <path d="M.5.5h9v9h-9z" fill="#fff" stroke="#555" />
            <path d="M2 3.500h6M2 5.500h5M2 7.500h3" stroke="#555" />
            <circle cx="8.500" cy="8" r="3.500" fill="#2f62a8" />
            <path d="M6 8l2-2 1 2-1 2z" fill="#4aa05a" />
          </Svg>
        </ViewButton>
        <ViewButton type="button" aria-label="Jäsennys" $width={19}>
          <Svg w={9} h={9}>
            <path d="M0 .5h6M3 2.500h6M3 4.500h6M1 6.500h6M0 8.500h9" stroke="#777" />
          </Svg>
        </ViewButton>
        <ViewButton type="button" aria-label="Luonnos" $width={19}>
          <Svg w={10} h={9}>
            <path d="M0 .5h10M0 2.500h10M0 4.500h10M0 6.500h10M0 8.500h10" stroke="#666" />
          </Svg>
        </ViewButton>
      </ViewTools>
      <Zoom>
        <span>71%</span>
        <RoundButton type="button" aria-label="Loitonna">
          <Svg w={8} h={8}>
            <rect y="3" width="8" height="2" fill="#444" />
          </Svg>
        </RoundButton>
        <ZoomSlider
          type="range"
          aria-label="Zoomaus"
          min="0"
          max="100"
          value={zoom}
          onChange={(e) => setZoom(e.target.value)}
        />
        <RoundButton type="button" aria-label="Lähennä">
          <Svg w={8} h={8}>
            <path d="M3 0h2v3h3v2H5v3H3V5H0V3h3z" fill="#444" />
          </Svg>
        </RoundButton>
      </Zoom>
    </StatusBar>
  );
};

const TrayIcons = () => (
  <>
    <Svg w={17}>
      <ellipse cx="8" cy="8" rx="6" ry="4" fill="none" stroke="#4a2410" strokeWidth="5" />
      <ellipse cx="8" cy="8" rx="6" ry="4" fill="none" stroke="#e0621f" strokeWidth="3" />
      <path d="M7 1h2v6H7zM8 12l3 3v-5z" fill="#2a1206" />
    </Svg>
    <Svg w={17}>
      <path d="M7 9l-6 6" stroke="#1d4fc4" strokeWidth="3" />
      <circle cx="10" cy="6" r="5" fill="#e6f2fd" stroke="#a9c6e6" />
    </Svg>
    <Svg>
      <path
        d="M1 1q7 2 14 0v7q-1 5-7 8-6-3-7-8z"
        fill="#b3152d"
        stroke="#f2f2f2"
        strokeWidth="1.500"
      />
      <path d="M4 10V5l4 3 4-3v5" fill="none" stroke="#fff" strokeWidth="2" />
    </Svg>
    <Svg w={17}>
      <circle cx="6" cy="6" r="5" fill="#8d949c" stroke="#333" />
      <circle cx="5" cy="6" r="2" fill="#333" />
      <path d="M9 1q4 4 0 10" stroke="#ddd" strokeWidth="1.500" fill="none" />
      <path d="M10 15l6-6M13 15l3-3" stroke="#8d9bf5" />
    </Svg>
    <Svg>
      <path d="M1 5h3l5-4v14l-5-4H1z" fill="#d6603c" stroke="#3a1309" />
      <path d="M11.500 3q2 5 0 10M14 1q3 7 0 14" fill="none" stroke="#5a1e10" strokeWidth="1.500" />
    </Svg>
    <Svg w={17}>
      <path d="M6 9l6-2 3 5-7 4z" fill="#c7ccd1" stroke="#3d4650" />
      <path d="M2 0l3 2 3-1 1 5-4 3-3-3z" fill="#35c02e" stroke="#1a7a1a" />
    </Svg>
    <Svg w={17}>
      <rect x="1" y="2" width="14" height="10" fill="#0b1a38" stroke="#d9d5c8" />
      <path d="M4 15h8M4 9l4-3 3 2 3-5" stroke="#9fd0f5" fill="none" strokeWidth="1.500" />
    </Svg>
  </>
);

const Taskbar = () => (
  <TaskBar>
    <StartButton type="button">
      <FlagIcon />
      Käynnistä
    </StartButton>
    <QuickLaunch>
      <DesktopIcon />
      <OutlookIcon />
      <ExplorerIcon />
      <Svg w={13} h={16}>
        <path d="M5 1l3 3-3 3M9 1l3 3-3 3" fill="none" stroke="#b8d2fb" />
      </Svg>
    </QuickLaunch>
    <TaskList>
      {TASKS.map((task) => (
        <TaskButton key={task.text} type="button" $active={task.active}>
          {task.icon}
          <span>{task.text}</span>
        </TaskButton>
      ))}
    </TaskList>
    <SearchForm onSubmit={(e) => e.preventDefault()}>
      <input type="text" aria-label="Etsi työasemasta" placeholder="Etsi työasemasta" />
      <button type="submit" aria-label="Etsi">
        <MagnifierIcon />
      </button>
    </SearchForm>
    <Language>FI</Language>
    <Tray>
      <TrayIcons />
      <time>10:20</time>
    </Tray>
  </TaskBar>
);

const App = () => {
  const [tab, setTab] = useState("Aloitus");

  return (
    <Screen>
      <GlobalStyle />
      <Chrome>
        <TitleBar>
          <AppButton type="button" aria-label="Word">
            <WordIcon />
          </AppButton>
          <Title>
            {"Pttssuunnitelma versio 2, 120312[1].rtf [Yhteensopivuustila]  -  Microsoft Word"}
          </Title>
          <WindowButtons>
            <button type="button" aria-label="Pienennä">
              <Svg w={14} h={14}>
                <rect
                  x="1.500"
                  y="7.500"
                  width="10"
                  height="4"
                  rx="1"
                  fill="#fff"
                  stroke="#565b6b"
                />
              </Svg>
            </button>
            <button type="button" aria-label="Palauta">
              <Svg w={14} h={14}>
                <path d="M4.500 1.500h8v7h-8z" fill="#fff" stroke="#565b6b" />
                <path d="M1.500 4.500h8v7h-8zM4.500 7.500h2v1h-2z" fill="#fff" stroke="#565b6b" />
              </Svg>
            </button>
            <button type="button" aria-label="Sulje">
              <Svg w={14} h={14}>
                <path
                  d="M1.500 2.500h3L6.500 5l2-2.500h3v2L9 7l2.500 2.500v2h-3L6.500 9l-2 2.500h-3v-2L4 7 1.500 4.500z"
                  fill="#fff"
                  stroke="#565b6b"
                />
              </Svg>
            </button>
          </WindowButtons>
        </TitleBar>
        <TabRow>
          <FileTab type="button">Tiedosto</FileTab>
          {TABS.map((name) => (
            <Tab key={name} type="button" $active={name === tab} onClick={() => setTab(name)}>
              {name}
            </Tab>
          ))}
          <TabTools>
            <button type="button" aria-label="Pienennä valintanauha">
              <Svg w={9} h={8}>
                <path d="M.5 4.500l4-4 4 4v2h-2l-2-2-2 2h-2z" fill="#fff" stroke="#666b75" />
              </Svg>
            </button>
            <button type="button" aria-label="Ohje">
              <Svg>
                <circle cx="8" cy="8" r="7.500" fill="#4a80cf" stroke="#3566ae" />
                <Glyph x="8" y="12.500" size="13" fill="#fff" fontWeight="700" textAnchor="middle">
                  ?
                </Glyph>
              </Svg>
            </button>
          </TabTools>
        </TabRow>
      </Chrome>
      <Ribbon>
        <ClipboardGroup />
        <FontGroup />
        <ParagraphGroup />
        <StylesGroup />
        <EditingGroup />
      </Ribbon>
      <QuickAccess />
      <Workspace>
        <Canvas>
          <Page>
            <DocTitle>
              {"TURUN SOSIAALI- JA TERVEYSTOIMEN\nPOTILASTURVALLISUUSSUUNNITELMA  2012"}
            </DocTitle>
            <DocText $top={11} $indent={161}>LUONNOS</DocText>
            <DocText $top={271} $indent={345}>
              {"Taina Soini\nJane Marttila\n12.3.2012"}
            </DocText>
          </Page>
          <Page />
        </Canvas>
        <Scroll />
      </Workspace>
      <Status />
      <Taskbar />
    </Screen>
  );
};

export default App;
